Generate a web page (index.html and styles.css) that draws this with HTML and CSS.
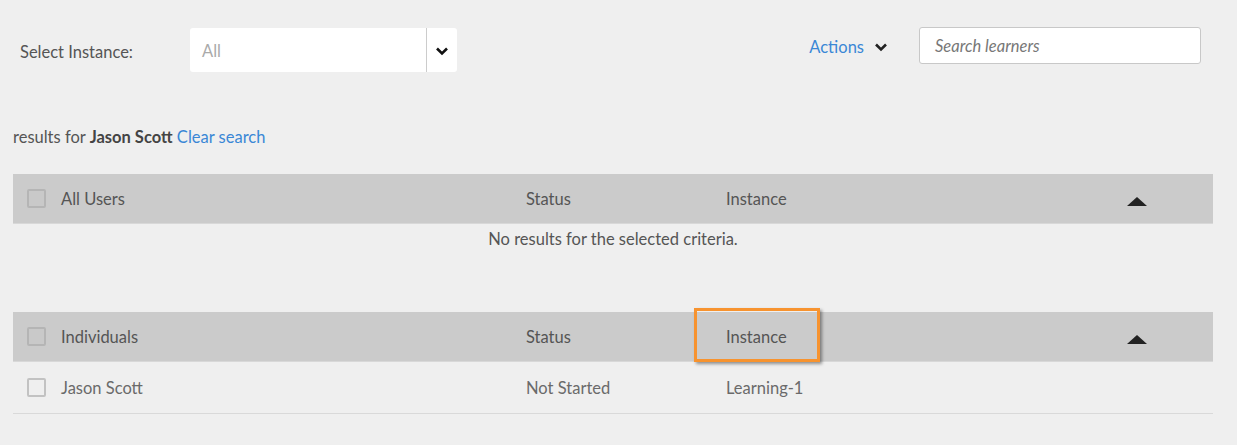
FILE: index.html
```html
<!DOCTYPE html>
<html>
<head>
<meta charset="utf-8">
<link rel="stylesheet" href="styles.css">
</head>
<body>
<div class="toolbar">
  <div class="left">
    <span class="label">Select Instance:</span>
    <div class="select">
      <span class="value">All</span>
      <span class="caret">
        <svg width="14" height="10" viewBox="0 0 14 10"><path d="M2 2.5 L7 7.5 L12 2.5" fill="none" stroke="#111" stroke-width="2.6"/></svg>
      </span>
    </div>
  </div>
  <div class="right">
    <a class="actions">Actions
      <svg width="14" height="10" viewBox="0 0 14 10"><path d="M2 2.5 L7 7.5 L12 2.5" fill="none" stroke="#222" stroke-width="2.6"/></svg>
    </a>
    <div class="search">Search learners</div>
  </div>
</div>

<div class="content">
  <p class="results">results for <b>Jason Scott</b> <a class="link">Clear search</a></p>

  <div class="table">
    <div class="row head">
      <div class="cell name"><span class="cb"></span>All Users</div>
      <div class="cell">Status</div>
      <div class="cell">Instance</div>
      <div class="cell sort"><span class="tri"></span></div>
    </div>
    <div class="empty">No results for the selected criteria.</div>
  </div>

  <div class="table second">
    <div class="row head">
      <div class="cell name"><span class="cb"></span>Individuals</div>
      <div class="cell">Status</div>
      <div class="cell inst">Instance<span class="highlight"></span></div>
      <div class="cell sort"><span class="tri"></span></div>
    </div>
    <div class="row body">
      <div class="cell name"><span class="cb light"></span>Jason Scott</div>
      <div class="cell">Not Started</div>
      <div class="cell">Learning-1</div>
      <div class="cell"></div>
    </div>
  </div>
</div>
</body>
</html>
```

FILE: styles.css
```css
* { box-sizing: border-box; }
html, body { margin: 0; padding: 0; }
body {
  background: #efefef;
  font-family: "Source Sans Pro", Lato, "Open Sans", sans-serif;
  font-size: 16.5px;
  color: #555;
  width: 1237px;
  height: 445px;
  overflow: hidden;
}
.toolbar {
  display: flex;
  justify-content: space-between;
  align-items: flex-start;
  padding: 27px 36px 0 20px;
}
.left {
  display: flex;
  align-items: center;
  margin-top: 1px;
}
.label { width: 170px; color: #555; padding-top: 3px; }
.select {
  display: flex;
  align-items: center;
  width: 267px;
  height: 44px;
  background: #fff;
  border-radius: 3px;
}
.select .value { flex: 1; padding-left: 12px; color: #aaa; padding-top: 2px; }
.select .caret {
  width: 31px;
  height: 44px;
  border-left: 1px solid #ccc;
  display: flex;
  align-items: center;
  justify-content: center;
  padding-top: 1px;
}
.right {
  display: flex;
  align-items: center;
}
.actions {
  color: #3a87d6;
  display: flex;
  align-items: center;
  gap: 10px;
  margin-right: 31px;
  padding-top: 3px;
}
.search {
  width: 282px;
  height: 37px;
  background: #fff;
  border: 1px solid #c8c8c8;
  border-radius: 3px;
  padding: 1px 15px 0;
  display: flex;
  align-items: center;
  font-style: italic;
  color: #777;
}
.content {
  padding: 0 24px 0 13px;
}
.results {
  margin: 50px 0 0 0;
  height: 30px;
  line-height: 30px;
  color: #555;
}
.results b { color: #444; }
.link { color: #3a87d6; }
.table { margin-top: 22px; width: 1200px; }
.table.second { margin-top: 58px; }
.row {
  display: grid;
  grid-template-columns: 513px 200px 1fr 152px;
  align-items: stretch;
}
.row.head {
  height: 50px;
  background: #cbcbcb;
  border-bottom: 1px solid #d8d8d8;
  color: #555;
}
.row.body {
  height: 52px;
  border-bottom: 1px solid #d9d9d9;
  color: #6a6a6a;
}
.cell {
  position: relative;
  display: flex;
  align-items: center;
}
.cell.name {
  padding-left: 14px;
  gap: 15px;
}
.cb {
  width: 19px;
  height: 19px;
  border: 2px solid #b5b5b5;
  border-radius: 2px;
  background: #c9c9c9;
  display: inline-block;
}
.cb.light { background: #efefef; border-color: #c2c2c2; }
.sort { justify-content: center; padding-top: 5px; }
.tri {
  width: 0; height: 0;
  border-left: 10px solid transparent;
  border-right: 10px solid transparent;
  border-bottom: 9px solid #222;
}
.empty {
  text-align: center;
  height: 30px;
  line-height: 30px;
  color: #555;
}
.highlight {
  position: absolute;
  left: -32px;
  top: -4px;
  width: 126px;
  height: 54px;
  border: 3px solid #f7932f;
  box-shadow: 2px 2px 3px rgba(0,0,0,0.4);
}
```
